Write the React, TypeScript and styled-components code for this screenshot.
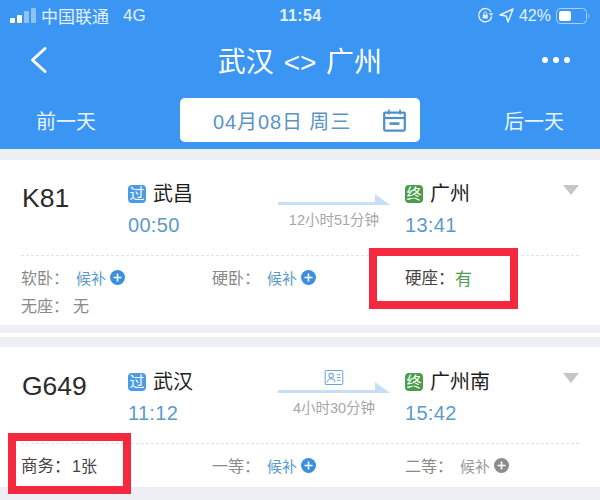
import React from "react";
import styled, { createGlobalStyle } from "styled-components";

const GlobalStyle = createGlobalStyle`
  html, body {
    margin: 0;
    padding: 0;
    background: #eeeff4;
    font-family: "Liberation Sans", "Noto Sans CJK SC", sans-serif;
  }
`;

const Page = styled.div`
  position: relative;
  width: 600px;
  height: 500px;
  overflow: hidden;
  background: #eeeff4;
`;

const Header = styled.header`
  height: 149px;
  background: #3a96f2;
  color: #fff;
  display: flex;
  flex-direction: column;
`;

const StatusBar = styled.div`
  height: 31px;
  padding: 0 9px 0 10px;
  display: grid;
  grid-template-columns: 1fr auto 1fr;
  align-items: center;
  color: #e4f1fd;
`;

const StatusLeft = styled.div`
  display: flex;
  align-items: center;
  gap: 5px;
  font-size: 17px;
`;

const Carrier = styled.span`
  margin-right: 9px;
`;

const Clock = styled.span`
  font-weight: 700;
  font-size: 16px;
  letter-spacing: 0.4px;
`;

const StatusRight = styled.div`
  display: flex;
  align-items: center;
  justify-content: flex-end;
  gap: 5px;
  font-size: 16px;
`;

const NavBar = styled.div`
  height: 67px;
  box-sizing: border-box;
  padding: 0 29px 9px;
  display: grid;
  grid-template-columns: 60px 1fr 60px;
  align-items: center;
`;

const Title = styled.h1`
  margin: 0;
  text-align: center;
  font-size: 28px;
  font-weight: 400;
  word-spacing: 2px;
`;

const More = styled.div`
  justify-self: end;
  display: flex;
  gap: 5px;
  margin-right: 1px;
`;

const Dot = styled.i`
  width: 6px;
  height: 6px;
  border-radius: 50%;
  background: #fff;
`;

const DateBar = styled.div`
  padding: 0 36px;
  display: flex;
  align-items: center;
  justify-content: space-between;
  font-size: 20px;
  color: #e9f4fe;
`;

const DayLink = styled.span`
  width: 60px;
  white-space: nowrap;
`;

const DatePicker = styled.div`
  width: 240px;
  height: 44px;
  box-sizing: border-box;
  background: #fff;
  border-radius: 5px;
  padding: 0 14px 0 33px;
  display: flex;
  align-items: center;
  justify-content: space-between;
  color: #5a94c6;
  font-size: 20px;
  letter-spacing: 0.9px;
`;

const Card = styled.section<{ $top: number; $height: number }>`
  margin-top: ${(p) => p.$top}px;
  height: ${(p) => p.$height}px;
  background: #fff;
  padding: 0 21px;
  display: flex;
  flex-direction: column;
`;

const Sliver = styled.div`
  margin-top: 8px;
  height: 4px;
  background: #fff;
`;

const Route = styled.div<{ $height: number; $shift: number }>`
  height: ${(p) => p.$height}px;
  padding-top: ${(p) => p.$shift}px;
  box-sizing: border-box;
  display: grid;
  grid-template-columns: 107px 150px 127px 1fr auto;
  align-items: start;
`;

const TrainNo = styled.div`
  font-size: 26.5px;
  line-height: 30px;
  padding-left: 1px;
  color: #2b2b2b;
`;

const Stop = styled.div`
  display: flex;
  flex-direction: column;
  gap: 8px;
`;

const StopName = styled.div`
  display: flex;
  align-items: center;
  gap: 7px;
  font-size: 20px;
  line-height: 22px;
  color: #1e1e1e;
`;

const Badge = styled.span<{ $color: string }>`
  width: 18px;
  height: 18px;
  border-radius: 4px;
  background: ${(p) => p.$color};
  color: #fff;
  font-size: 15px;
  line-height: 18px;
  text-align: center;
`;

const StopTime = styled.div`
  font-size: 20px;
  line-height: 24px;
  color: #5b9bca;
  letter-spacing: 0.3px;
`;

const Trip = styled.div`
  margin-top: -6px;
  display: flex;
  flex-direction: column;
  align-items: center;
  width: 112px;
`;

const TripIconSlot = styled.div`
  height: 17px;
  display: flex;
  justify-content: center;
  align-items: flex-end;
`;

const TripTime = styled.div`
  margin-top: 5px;
  font-size: 14.5px;
  line-height: 18px;
  color: #a6a6a6;
  white-space: nowrap;
`;

const Divider = styled.div`
  height: 0;
  border-top: 1px dashed #e2e2e2;
`;

const Seats = styled.div`
  padding-top: 7px;
  display: grid;
  grid-template-columns: 191px 193px 1fr;
  grid-auto-rows: 28px;
  align-items: center;
`;

const Seat = styled.div<{ $strong?: boolean }>`
  display: flex;
  align-items: center;
  font-size: ${(p) => (p.$strong ? 16.5 : 16)}px;
  white-space: nowrap;
  color: ${(p) => (p.$strong ? "#444" : "#8a8a8a")};
`;

const SeatName = styled.span`
  width: 50px;
`;

const SeatValue = styled.span<{ $color?: string; $left?: number; $size: number }>`
  color: ${(p) => p.$color || "inherit"};
  margin-left: ${(p) => p.$left || 0}px;
  margin-right: 4px;
  font-size: ${(p) => p.$size}px;
`;

const CaretMark = styled.svg`
  display: block;
  margin-top: 2px;
`;

const IdCardMark = styled.svg`
  flex: none;
  margin-bottom: -3px;
`;

const Highlight = styled.div<{ $x: number; $y: number; $w: number }>`
  position: absolute;
  left: ${(p) => p.$x}px;
  top: ${(p) => p.$y}px;
  width: ${(p) => p.$w}px;
  height: 61px;
  box-sizing: border-box;
  border: 8px solid #f4293f;
`;

const Signal = () => (
  <svg width="26" height="16" viewBox="0 0 26 16">
    <rect x="0" y="10" width="5" height="5" rx="1" fill="#fff" />
    <rect x="7" y="7" width="5" height="8" rx="1" fill="#fff" />
    <rect x="14" y="3" width="5" height="12" rx="1" fill="#8fc3f6" />
    <rect x="21" y="0" width="5" height="15" rx="1" fill="#8fc3f6" />
  </svg>
);

const RotationLock = () => (
  <svg width="17" height="17" viewBox="0 0 17 17" fill="none" stroke="#e4f1fd" strokeWidth="1.4">
    <path d="M14.8 9.5A6.6 6.6 0 1 1 14 4.8" />
    <path d="M15.8 6.4l-1.6 2.2-1.8-2z" fill="#e4f1fd" strokeWidth="0.6" />
    <rect x="5.8" y="7.6" width="5" height="4" rx="0.6" fill="#e4f1fd" stroke="none" />
    <path d="M6.8 7.6V6.4a1.5 1.5 0 0 1 3 0v1.2" strokeWidth="1" />
  </svg>
);

const Location = () => (
  <svg width="15" height="15" viewBox="0 0 15 15" fill="none" stroke="#e4f1fd" strokeWidth="1.5" strokeLinejoin="round">
    <path d="M14 1L1 7l6.2 1L9 14z" />
  </svg>
);

const Battery = () => (
  <svg width="35" height="16" viewBox="0 0 35 16">
    <rect x="0.5" y="0.5" width="30" height="15" rx="4" fill="none" stroke="#a9d2f9" />
    <rect x="3" y="3" width="12" height="10" rx="2" fill="#fff" />
    <path d="M32.5 5.5c1.2.4 1.2 4.6 0 5z" fill="#a9d2f9" />
  </svg>
);

const BackArrow = () => (
  <svg width="20" height="28" viewBox="0 0 20 28" fill="none" stroke="#fff" strokeWidth="3" strokeLinecap="round" strokeLinejoin="round">
    <path d="M16 2.5L3.5 14 16 25.5" />
  </svg>
);

const CalendarIcon = () => (
  <svg width="23" height="23" viewBox="0 0 23 23" fill="none" stroke="#4f8fc6" strokeWidth="2.2">
    <rect x="1.2" y="3.6" width="20.6" height="18" rx="1" />
    <path d="M1.2 9h20.6" />
    <path d="M6 0.5v5M17 0.5v5" strokeWidth="1.6" />
    <path d="M6.5 14.6h10" strokeWidth="2.6" />
  </svg>
);

const TripArrow = () => (
  <svg width="112" height="12" viewBox="0 0 112 12" style={{ display: "block" }}>
    <path d="M0 8h97V0l15 11H0z" fill="#c5dff6" />
  </svg>
);

const IdCard = () => (
  <IdCardMark width="20" height="15" viewBox="0 0 20 16" fill="none" stroke="#6ea6d3" strokeWidth="1.1">
    <rect x="0.6" y="0.6" width="18.8" height="14.8" rx="1.5" />
    <circle cx="7" cy="6" r="2.4" />
    <path d="M3 13c0-5 8-5 8 0" />
    <path d="M13 5h4M13 8h4M13 11h4" />
  </IdCardMark>
);

const PlusDot = ({ color }: { color: string }) => (
  <svg width="15" height="15" viewBox="0 0 15 15">
    <circle cx="7.5" cy="7.5" r="7.5" fill={color} />
    <path d="M7.5 3.5v8M3.5 7.5h8" stroke="#fff" strokeWidth="1.6" />
  </svg>
);

const Caret = () => (
  <CaretMark width="16" height="10" viewBox="0 0 16 10">
    <path d="M0 0h16L8 10z" fill="#c6c6c6" />
  </CaretMark>
);

type SeatInfo = {
  name: string;
  value: string;
  tone?: "blue" | "grey" | "green";
  plus?: string;
  strong?: boolean;
  left?: number;
  size?: number;
};

type Train = {
  no: string;
  from: string;
  depart: string;
  to: string;
  arrive: string;
  duration: string;
  idCheck?: boolean;
  top: number;
  height: number;
  routeHeight: number;
  shift: number;
  seats: SeatInfo[];
};

const toneColor = { blue: "#5b9bca", grey: "#9a9a9a", green: "#4f9d4f" };

const trains: Train[] = [
  {
    no: "K81",
    from: "武昌",
    depart: "00:50",
    to: "广州",
    arrive: "13:41",
    duration: "12小时51分钟",
    top: 11,
    height: 165,
    routeHeight: 95,
    shift: 23,
    seats: [
      { name: "软卧：", value: "候补", tone: "blue", plus: "#3a90de", left: 5 },
      { name: "硬卧：", value: "候补", tone: "blue", plus: "#3a90de", left: 5 },
      { name: "硬座：", value: "有", tone: "green", strong: true, size: 17 },
      { name: "无座：", value: "无", left: 2, size: 16 },
    ],
  },
  {
    no: "G649",
    from: "武汉",
    depart: "11:12",
    to: "广州南",
    arrive: "15:42",
    duration: "4小时30分钟",
    idCheck: true,
    top: 10,
    height: 140,
    routeHeight: 96,
    shift: 24,
    seats: [
      { name: "商务：", value: "1张", strong: true, left: 1, size: 16 },
      { name: "一等：", value: "候补", tone: "blue", plus: "#3a90de", left: 5 },
      { name: "二等：", value: "候补", tone: "grey", plus: "#8c8c8c", left: 5 },
    ],
  },
];

const TrainCard = ({ train }: { train: Train }) => (
  <Card $top={train.top} $height={train.height}>
    <Route $height={train.routeHeight} $shift={train.shift}>
      <TrainNo>{train.no}</TrainNo>
      <Stop>
        <StopName>
          <Badge $color="#4a9ae6">过</Badge>
          {train.from}
        </StopName>
        <StopTime>{train.depart}</StopTime>
      </Stop>
      <Trip>
        <TripIconSlot>{train.idCheck && <IdCard />}</TripIconSlot>
        <TripArrow />
        <TripTime>{train.duration}</TripTime>
      </Trip>
      <Stop>
        <StopName>
          <Badge $color="#4a9d4a">终</Badge>
          {train.to}
        </StopName>
        <StopTime>{train.arrive}</StopTime>
      </Stop>
      <Caret />
    </Route>
    <Divider />
    <Seats>
      {train.seats.map((seat) => (
        <Seat key={seat.name} $strong={seat.strong}>
          <SeatName>{seat.name}</SeatName>
          <SeatValue
            $color={seat.tone && toneColor[seat.tone]}
            $left={seat.left}
            $size={seat.size || 15}
          >
            {seat.value}
          </SeatValue>
          {seat.plus && <PlusDot color={seat.plus} />}
        </Seat>
      ))}
    </Seats>
  </Card>
);

const App = () => (
  <Page>
    <GlobalStyle />
    <Header>
      <StatusBar>
        <StatusLeft>
          <Signal />
          <Carrier>中国联通</Carrier>
          <span>4G</span>
        </StatusLeft>
        <Clock>11:54</Clock>
        <StatusRight>
          <RotationLock />
          <Location />
          <span>42%</span>
          <Battery />
        </StatusRight>
      </StatusBar>
      <NavBar>
        <BackArrow />
        <Title>武汉 &lt;&gt; 广州</Title>
        <More>
          <Dot />
          <Dot />
          <Dot />
        </More>
      </NavBar>
      <DateBar>
        <DayLink>前一天</DayLink>
        <DatePicker>
          04月08日 周三
          <CalendarIcon />
        </DatePicker>
        <DayLink>后一天</DayLink>
      </DateBar>
    </Header>
    <TrainCard train={trains[0]} />
    <Sliver />
    <TrainCard train={trains[1]} />
    <Highlight $x={369} $y={248} $w={149} />
    <Highlight $x={8} $y={433} $w={123} />
  </Page>
);

export default App;
